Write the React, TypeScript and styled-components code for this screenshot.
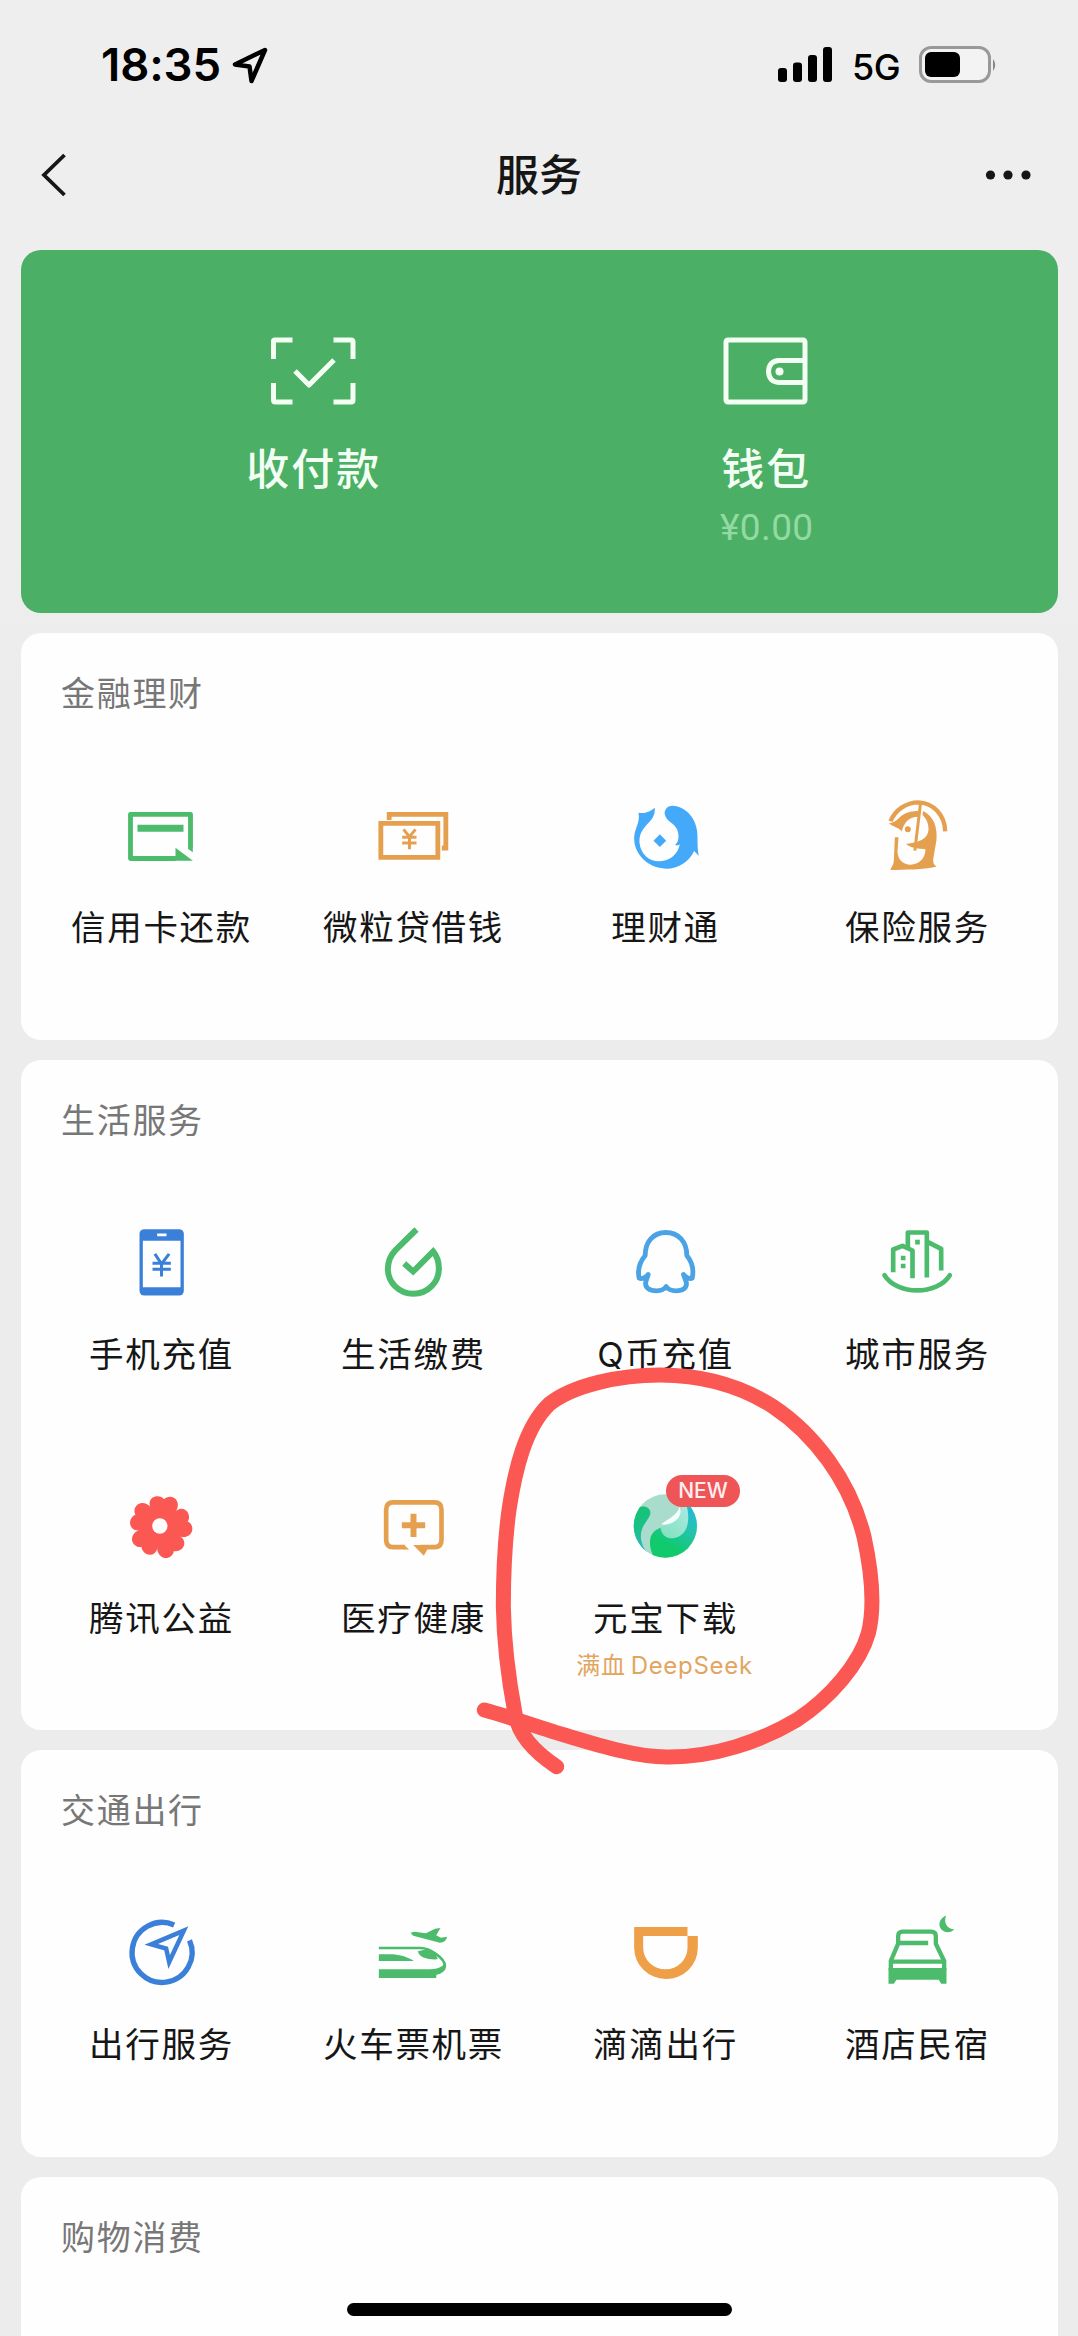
import React from 'react';
import styled, { createGlobalStyle } from 'styled-components';

const GREEN = '#4dbb6c';
const ORANGE = '#e5a04f';
const BLUE = '#3b80d8';
const SKY = '#45a9f9';
const RED = '#fb5753';

const GlobalStyle = createGlobalStyle`
  * { box-sizing: border-box; }
  body {
    margin: 0;
    background: #eeeeee;
    font-family: Inter, "Noto Sans CJK SC", sans-serif;
    color: #161616;
  }
`;

const Page = styled.div`
  position: relative;
  width: 1078px;
  height: 2336px;
  overflow: hidden;
  background: linear-gradient(#eeeeee 0 560px, #ececec 700px);
`;

const StatusBar = styled.header`
  display: flex;
  align-items: center;
  justify-content: space-between;
  height: 129px;
  padding: 0 79px 0 101px;
  color: #000;
`;

const StatusGroup = styled.div`
  display: flex;
  align-items: center;
`;

const Clock = styled.span`
  font-size: 45.5px;
  line-height: 50px;
  font-weight: 600;
  width: 121px;
  letter-spacing: -0.1px;
  white-space: nowrap;
`;

const Network = styled.span`
  width: 50px;
  margin: 4px 17px 0 19px;
  font-size: 36px;
  line-height: 40px;
  font-weight: 500;
  letter-spacing: -0.5px;
`;

const NavBar = styled.nav`
  display: flex;
  align-items: center;
  justify-content: space-between;
  height: 92px;
  margin-bottom: 28.5px;
  padding: 0 45px 0 39px;
`;

const NavTitle = styled.h1`
  margin: 0;
  font-size: 43px;
  line-height: 60px;
  font-weight: 500;
`;

const Content = styled.main`
  display: flex;
  flex-direction: column;
  gap: 20px;
  padding: 0 20.5px;
`;

const Hero = styled.section`
  display: grid;
  grid-template-columns: 452.5px 452.5px;
  justify-content: center;
  height: 363px;
  padding-top: 83px;
  border-radius: 20px;
  background: #4baf66;
`;

const HeroItem = styled.div`
  display: flex;
  flex-direction: column;
  align-items: center;
  color: #f4fff4;
`;

const HeroLabel = styled.div`
  margin-top: 30px;
  padding-left: 2px;
  font-size: 43px;
  line-height: 60px;
  font-weight: 500;
  letter-spacing: 2px;
`;

const Balance = styled.div`
  margin-top: 8px;
  padding-left: 3px;
  font-family: Roboto, sans-serif;
  font-size: 37px;
  line-height: 42px;
  letter-spacing: 0.4px;
  color: #93d9a2;
`;

const Card = styled.section<{ $height: number }>`
  height: ${(p) => p.$height}px;
  padding: 36px 14px 0;
  border-radius: 20px;
  background: #fefefe;
`;

const CardTitle = styled.h2`
  margin: 0 0 77px;
  padding-left: 26.5px;
  font-size: 34px;
  line-height: 50px;
  font-weight: 400;
  letter-spacing: 1.7px;
  color: #777;
`;

const ServiceGrid = styled.div`
  display: grid;
  grid-template-columns: repeat(4, 252px);
  grid-auto-rows: 264.5px;
`;

const Service = styled.div`
  display: flex;
  flex-direction: column;
  align-items: center;
`;

const IconBox = styled.div`
  position: relative;
  width: 80px;
  height: 80px;
  svg { display: block; }
`;

const ServiceName = styled.div`
  margin-top: 27px;
  padding-left: 2px;
  font-size: 34.5px;
  line-height: 50px;
  letter-spacing: 1.7px;
  white-space: nowrap;
`;

const ServiceNote = styled.div`
  display: flex;
  gap: 5px;
  margin-top: 4px;
  font-size: 24px;
  line-height: 36px;
  letter-spacing: 0.7px;
  white-space: nowrap;
  color: #e2a55f;
`;

const Badge = styled.span`
  position: absolute;
  left: 41.5px;
  top: -12px;
  width: 74px;
  height: 32px;
  border-radius: 16px;
  background: #ef5457;
  color: #fff0f0;
  font-size: 21px;
  line-height: 32px;
  font-weight: 500;
  text-align: center;
`;

const Scribble = styled.svg`
  position: absolute;
  left: 460px;
  top: 1340px;
  pointer-events: none;
`;

const HomeIndicator = styled.div`
  position: absolute;
  left: 347px;
  bottom: 20px;
  width: 385px;
  height: 13px;
  border-radius: 7px;
  background: #000;
`;

const Glyph = ({ box, children }: { box: string; children: React.ReactNode }) => (
  <svg width="80" height="80" viewBox={`${box} 240 240`} fill="none">{children}</svg>
);

const CreditCard = () => (
  <Glyph box="241.5 408">
    <path d="M405 595.5H270V463H450V566" stroke={GREEN} strokeWidth="14.5" strokeLinejoin="round" />
    <path d="M443 560L457 566V577L443 567zM405 563L457 602H400V589H405z" fill={GREEN} />
    <path d="M291 504.500H429" stroke={GREEN} strokeWidth="21" />
  </Glyph>
);

const Bills = () => (
  <Glyph box="997.5 408">
    <g stroke={ORANGE} strokeWidth="14.5">
      <path d="M1021 490H1192V592H1021zM1046 480V463H1216V564H1204" />
      <path d="M1089 508L1107 530L1125 508M1107 530V568M1085 532H1128M1085 549H1128" strokeWidth="9" />
    </g>
  </Glyph>
);

const Whale = () => (
  <Glyph box="193.500 408">
    <path fill={SKY} d="M234 458C255 462 270 453 283 443C284 470 272 480 258 495C240 515 236 530 237 548C240 582 268 606 298 604C330 603 352 582 358 553C354 557 348 557 344 554C352 548 354 540 354 528C354 510 345 497 332 488C316 477 308 460 315 449C322 437 336 436 348 439C390 450 413 490 411 535C411 560 412 575 415 587C409 583 405 577 401 573C385 608 350 627 316 626C262 625 221 583 221 535C221 505 240 490 234 458z" />
    <path fill={SKY} d="M298 523L317 542L298 561L279 542z" />
  </Glyph>
);

const Umbrella = () => (
  <Glyph box="949.500 408">
    <path d="M990 484C1003 450 1038 427 1073 427C1118 428 1153 465 1154 514" stroke={ORANGE} strokeWidth="13" />
    <path d="M1080 430L1063 572" stroke={ORANGE} strokeWidth="9" />
    <g fill={ORANGE}>
      <path d="M985 490C1005 488 1010 478 1022 468C1038 456 1055 453 1076 453L1074 470C1045 470 1030 488 1024 514C1010 500 998 502 985 490z" />
      <path d="M1088 453C1120 470 1131 500 1128 540L1118 598C1118 608 1119 614 1128 620C1085 630 1035 628 990 630C992 620 1000 616 1000 600L1003 532H1014L1011 575C1012 600 1030 615 1052 614C1078 612 1094 595 1095 568C1075 566 1055 566 1036 552C1075 546 1100 540 1104 510C1105 488 1096 475 1086 464z" />
      <circle cx="1042" cy="508" r="9" />
    </g>
  </Glyph>
);

const Phone = () => (
  <Glyph box="241.500 127.500">
    <rect x="297" y="146" width="133" height="199" rx="14" fill={BLUE} />
    <path fill="#fefefe" d="M307 181H420V320H307zM350 159H378V167H350z" />
    <path d="M343 220L363 250L386 220M363 250V288M336 248H391M336 266H391" stroke={BLUE} strokeWidth="9" />
  </Glyph>
);

const Drop = () => (
  <Glyph box="997.500 127.500">
    <path d="M1128 147L1065 209C1048 227 1042 246 1042 266A77 75 0 0 0 1119 340A77 75 0 0 0 1195 263C1195 243 1189 226 1178 213L1118 273L1091 249" stroke={GREEN} strokeWidth="18" />
  </Glyph>
);

const Penguin = () => (
  <Glyph box="193.500 127.500">
    <g stroke="#4aa3e4" strokeWidth="14.5" strokeLinejoin="round">
      <path d="M316 156C278 156 254 184 254 225C240 242 230 266 236 293C244 297 255 292 263 282L256 304C252 322 268 331 288 331C300 331 311 327 317 318C323 327 335 331 347 331C367 331 381 322 377 304L369 282C377 292 388 297 395 293C401 266 393 242 379 225C379 184 354 156 316 156z" />
    </g>
  </Glyph>
);

const City = () => (
  <Glyph box="949.500 127.500">
    <g stroke={GREEN} strokeWidth="14" strokeLinejoin="round">
      <path d="M998 275V207L1026 196L1056 210V293M1042 200V156H1099V291M1101 184L1142 205V270" />
      <path d="M972 284C1010 345 1130 345 1168 284" strokeLinecap="round" />
    </g>
    <path fill={GREEN} d="M1064 178H1078V192H1064zM1021 226H1035V239H1021zM1021 250H1035V263H1021z" />
  </Glyph>
);

const Flower = () => (
  <Glyph box="241.500 111">
    <g fill={RED} transform="translate(360 230)">
      {[10, 82, 154, 226, 298].map((a) => (
        <path key={a} transform={`rotate(${a})`} d="M0 0L-34 -42C-46 -58 -48 -70 -40 -80C-30 -92 -12 -91 -4 -83C4 -96 24 -98 34 -86C44 -74 42 -58 32 -44z" />
      ))}
      <circle r="52" />
    </g>
    <circle cx="358" cy="228" r="23" fill="#fff" />
  </Glyph>
);

const Medical = () => (
  <Glyph box="997.500 111">
    <path d="M1093 291.500H1058Q1037 291.500 1037 270V179Q1037 157 1058 157H1182Q1203 157 1203 179V270Q1203 291.500 1182 291.500H1140" stroke={ORANGE} strokeWidth="14" />
    <path fill={ORANGE} d="M1090 284.500L1106 298.500H1090zM1118 285H1160V299L1150 317zM1110 191H1128V217H1154V235H1128V261H1110V235H1084V217H1110z" />
  </Glyph>
);

const Yuanbao = () => (
  <Glyph box="493.500 441">
    <defs>
      <clipPath id="orb"><circle cx="614.500" cy="558" r="95" /></clipPath>
      <linearGradient id="leaf" x1="0" y1="0" x2="0.3" y2="1">
        <stop offset="0" stopColor="#0fc565" /><stop offset="0.55" stopColor="#1cc08a" /><stop offset="1" stopColor="#2bb4dc" />
      </linearGradient>
      <linearGradient id="rim" x1="0.9" y1="0" x2="0.4" y2="1">
        <stop offset="0" stopColor="#22b3ee" /><stop offset="0.45" stopColor="#24c3ae" /><stop offset="0.8" stopColor="#10ca6c" />
      </linearGradient>
      <linearGradient id="inner" x1="0.8" y1="0" x2="0" y2="1">
        <stop offset="0" stopColor="#a9e9e0" /><stop offset="1" stopColor="#7fe0bb" />
      </linearGradient>
    </defs>
    <g clipPath="url(#orb)">
      <rect x="510" y="450" width="210" height="210" fill="#a9dccd" />
      <path fill="url(#leaf)" d="M500 490L540 500C560 496 573 508 569 524C560 545 541 558 541 590C543 620 558 640 582 660H500z" />
      <path fill="url(#rim)" d="M582 655C560 615 562 572 606 562C640 552 670 530 680 490L730 480V670H590z" />
      <path fill="url(#inner)" d="M600 563C640 552 668 525 664 490L678 496C690 540 682 578 652 591C625 602 603 588 600 563z" />
      <path fill="#f3fffc" d="M602 553C625 535 650 525 657 500C672 530 635 560 602 553z" />
    </g>
  </Glyph>
);

const Compass = () => (
  <Glyph box="241.500 99">
    <path d="M401 135A90 90 0 1 0 447 181" stroke={BLUE} strokeWidth="16" />
    <path d="M430 152L332 193L377 206L386 246z" stroke={BLUE} strokeWidth="13.500" />
  </Glyph>
);

const Train = () => (
  <Glyph box="997.500 99">
    <path d="M1015 204H1140C1168 204 1213 235 1213 257C1213 270 1200 279 1184 281" stroke={GREEN} strokeWidth="8" />
    <path fill={GREEN} d="M1015 268H1160C1185 268 1200 264 1212 252C1216 270 1206 280 1188 283L1187 294H1015zM1015 223H1058C1085 226 1102 232 1120 243H1015zM1132 214L1165 206C1180 215 1188 225 1192 238C1165 240 1136 234 1132 214zM1110 158L1122 155L1156 160L1184 146L1200 144L1187 166L1201 173L1220 170Q1217 186 1198 188L1118 167z" />
  </Glyph>
);

const RideHail = () => (
  <Glyph box="193.500 99">
    <path fill="#ee9f48" d="M381 141H221V203A95 94 0 0 0 316 297A95 94 0 0 0 412 203V168H381V203A66 65 0 0 1 315 268A66 65 0 0 1 248 203V168H381z" />
  </Glyph>
);

const Bed = () => (
  <Glyph box="949.500 99">
    <g stroke={GREEN} strokeWidth="13">
      <path d="M991 270V243L1013 191V168Q1013 155 1026 155H1112Q1126 155 1126 168V191L1151 243V270M1013 189H1103M995 245H1148" />
    </g>
    <path fill={GREEN} d="M984 264H1158V311H1142L1135 299H1008L1000 311H984zM1157 107C1148 128 1160 146 1181 148C1172 160 1150 160 1140 145C1132 130 1140 112 1157 107z" />
  </Glyph>
);

type Entry = { name: string; Icon: React.FC; badge?: string; note?: [string, string] };
type Section = { title: string; height: number; entries: Entry[] };

const sections: Section[] = [
  {
    title: '金融理财',
    height: 407,
    entries: [
      { name: '信用卡还款', Icon: CreditCard },
      { name: '微粒贷借钱', Icon: Bills },
      { name: '理财通', Icon: Whale },
      { name: '保险服务', Icon: Umbrella },
    ],
  },
  {
    title: '生活服务',
    height: 670.5,
    entries: [
      { name: '手机充值', Icon: Phone },
      { name: '生活缴费', Icon: Drop },
      { name: 'Q币充值', Icon: Penguin },
      { name: '城市服务', Icon: City },
      { name: '腾讯公益', Icon: Flower },
      { name: '医疗健康', Icon: Medical },
      { name: '元宝下载', Icon: Yuanbao, badge: 'NEW', note: ['满血', 'DeepSeek'] },
    ],
  },
  {
    title: '交通出行',
    height: 407,
    entries: [
      { name: '出行服务', Icon: Compass },
      { name: '火车票机票', Icon: Train },
      { name: '滴滴出行', Icon: RideHail },
      { name: '酒店民宿', Icon: Bed },
    ],
  },
  { title: '购物消费', height: 407, entries: [] },
];

export default function App() {
  return (
    <Page>
      <GlobalStyle />
      <StatusBar>
        <StatusGroup>
          <Clock>18:35</Clock>
          <svg width="50" height="44" viewBox="0 0 50 44" fill="none">
            <path d="M43 7L13 21.500L27.500 23.500L29.500 38z" stroke="#000" strokeWidth="4.500" strokeLinejoin="round" />
          </svg>
        </StatusGroup>
        <StatusGroup>
          <svg width="56" height="36" viewBox="0 0 56 36">
            <rect x="1" y="21" width="9" height="14" rx="3" />
            <rect x="16" y="15.500" width="9" height="19.500" rx="3" />
            <rect x="31" y="8" width="9" height="27" rx="3" />
            <rect x="46" y="0" width="9" height="35" rx="3" />
          </svg>
          <Network>5G</Network>
          <svg width="80" height="38" viewBox="0 0 80 38">
            <rect x="1.500" y="1.500" width="69" height="34" rx="10.500" fill="#f3f3f3" stroke="#999" strokeWidth="3" />
            <rect x="6" y="6" width="35" height="25" rx="6" />
            <path d="M74 13Q78.500 19 74 25z" fill="#888" />
          </svg>
        </StatusGroup>
      </StatusBar>

      <NavBar>
        <svg width="60" height="48" viewBox="0 0 60 48" fill="none">
          <path d="M25.500 4L5 24L25.500 44" stroke="#161616" strokeWidth="3.800" />
        </svg>
        <NavTitle>服务</NavTitle>
        <svg width="54" height="12" viewBox="0 0 54 12" fill="#161616">
          <circle cx="11.500" cy="6" r="4.600" />
          <circle cx="29" cy="6" r="4.600" />
          <circle cx="47" cy="6" r="4.600" />
        </svg>
      </NavBar>

      <Content>
        <Hero>
          <HeroItem>
            <svg width="92" height="76" viewBox="0 0 92 76" fill="none" stroke="currentColor" strokeWidth="5">
              <path d="M6.500 26V8Q6.500 7 8 7H25.500M66.500 7H84Q86 7 86 9V26M86 50V67Q86 69 84 69H66.500M25.500 69H8.500Q6.500 69 6.500 67V50" />
              <path d="M28 38L42 52L67 27" strokeLinejoin="round" />
            </svg>
            <HeroLabel>收付款</HeroLabel>
          </HeroItem>
          <HeroItem>
            <svg width="92" height="76" viewBox="0 0 92 76" fill="none" stroke="currentColor" strokeWidth="5">
              <rect x="7" y="7" width="79" height="62" rx="2" />
              <path d="M86 27.500H60Q50 28 49.500 38.500Q50 49 60 49.500H86" />
              <circle cx="60.500" cy="38.500" r="4" fill="currentColor" stroke="none" />
            </svg>
            <HeroLabel>钱包</HeroLabel>
            <Balance>¥0.00</Balance>
          </HeroItem>
        </Hero>

        {sections.map(({ title, height, entries }) => (
          <Card key={title} $height={height}>
            <CardTitle>{title}</CardTitle>
            <ServiceGrid>
              {entries.map(({ name, Icon, badge, note }) => (
                <Service key={name}>
                  <IconBox>
                    <Icon />
                    {badge && <Badge>{badge}</Badge>}
                  </IconBox>
                  <ServiceName>{name}</ServiceName>
                  {note && (
                    <ServiceNote>
                      <span>{note[0]}</span>
                      <span>{note[1]}</span>
                    </ServiceNote>
                  )}
                </Service>
              ))}
            </ServiceGrid>
          </Card>
        ))}
      </Content>

      <Scribble width="440" height="450" viewBox="0 0 1320 1350" fill="none">
        <path
          d="M73 1110C150 1130 240 1165 330 1190C430 1220 530 1250 620 1251C760 1253 900 1205 1010 1140C1110 1075 1200 970 1225 880C1245 800 1236 700 1212 590C1170 420 1060 280 940 200C830 130 710 105 600 105C480 105 340 135 268 192C195 262 165 390 147 510C132 620 130 720 130 800C132 910 150 1040 165 1120C175 1190 230 1240 290 1280"
          stroke={RED}
          strokeWidth="45"
          strokeLinecap="round"
          strokeLinejoin="round"
        />
      </Scribble>
      <HomeIndicator />
    </Page>
  );
}
